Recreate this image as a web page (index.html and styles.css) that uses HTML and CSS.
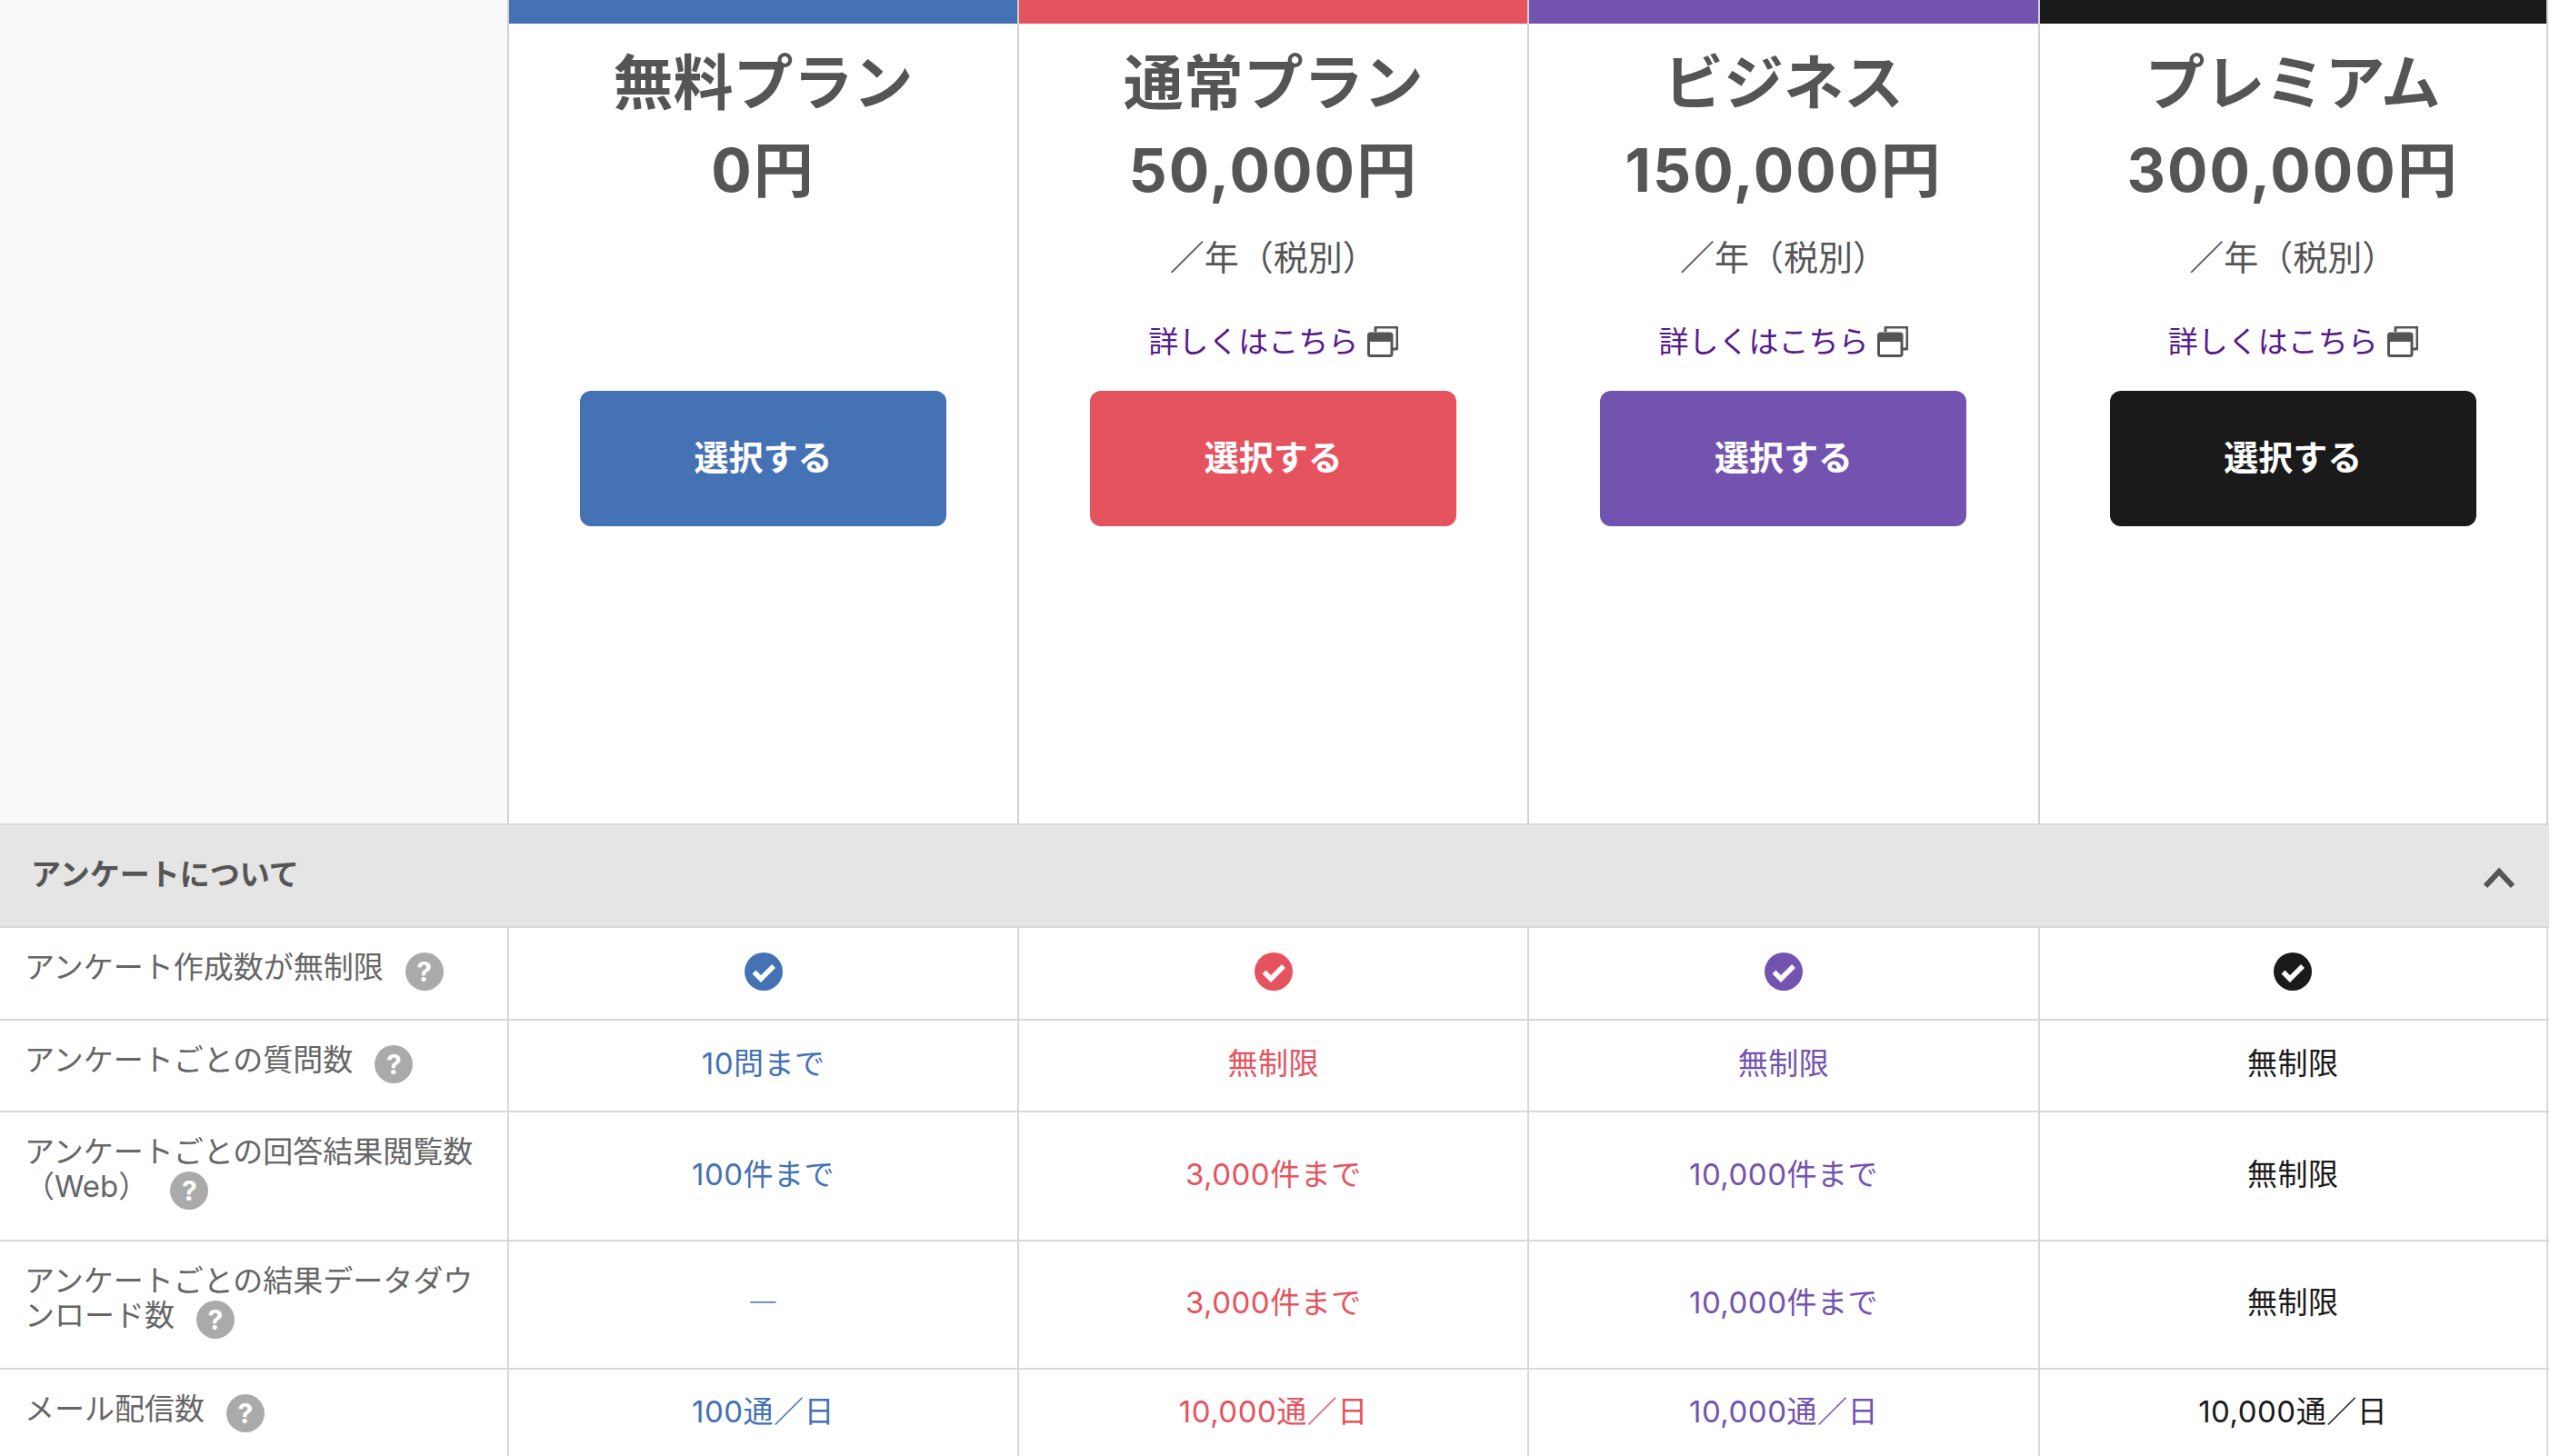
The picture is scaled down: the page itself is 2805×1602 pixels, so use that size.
FILE: index.html
```html
<!DOCTYPE html>
<html lang="ja">
<head>
<meta charset="utf-8">
<title>プラン比較</title>
<link rel="stylesheet" href="styles.css">
</head>
<body>
<svg class="defs" aria-hidden="true">
  <symbol id="check" viewBox="0 0 42 42"><circle cx="21" cy="21" r="21" fill="currentColor"/><path d="M10.500 21.500l7.500 7.500 14-14" fill="none" stroke="#fff" stroke-width="5.500"/></symbol>
  <symbol id="win" viewBox="0 0 34 34"><path d="M9 6V2a1 1 0 0 1 1-1h22a1 1 0 0 1 1 1v22a1 1 0 0 1-1 1h-4" fill="none" stroke="#555" stroke-width="3"/><rect x="1.500" y="8" width="25.500" height="24.500" rx="2" fill="#fff" stroke="#555" stroke-width="3"/><rect x="1.500" y="8" width="25.500" height="9" fill="#555"/></symbol>
</svg>
<main class="table">
  <div class="head">
    <div class="corner"></div>
    <section class="plan blue">
      <div class="bar"></div>
      <div class="info">
        <h2 class="title">無料プラン</h2>
        <p class="price">0円</p>
      </div>
      <a class="btn">選択する</a>
    </section>
    <section class="plan red">
      <div class="bar"></div>
      <div class="info">
        <h2 class="title">通常プラン</h2>
        <p class="price">50,000円</p>
        <p class="tax">／年（税別）</p>
        <a class="more">詳しくはこちら<svg class="win"><use href="#win"/></svg></a>
      </div>
      <a class="btn">選択する</a>
    </section>
    <section class="plan purple">
      <div class="bar"></div>
      <div class="info">
        <h2 class="title">ビジネス</h2>
        <p class="price">150,000円</p>
        <p class="tax">／年（税別）</p>
        <a class="more">詳しくはこちら<svg class="win"><use href="#win"/></svg></a>
      </div>
      <a class="btn">選択する</a>
    </section>
    <section class="plan black">
      <div class="bar"></div>
      <div class="info">
        <h2 class="title">プレミアム</h2>
        <p class="price">300,000円</p>
        <p class="tax">／年（税別）</p>
        <a class="more">詳しくはこちら<svg class="win"><use href="#win"/></svg></a>
      </div>
      <a class="btn">選択する</a>
    </section>
  </div>
  <div class="group">
    <span class="group-title">アンケートについて</span>
    <svg class="chev" viewBox="0 0 36 24"><path d="M3 21L18 5l15 16" fill="none" stroke="#555" stroke-width="6"/></svg>
  </div>
  <div class="row short">
    <div class="label">アンケート作成数が無制限<i class="q">?</i></div>
    <div class="cell blue"><svg class="check"><use href="#check"/></svg></div>
    <div class="cell red"><svg class="check"><use href="#check"/></svg></div>
    <div class="cell purple"><svg class="check"><use href="#check"/></svg></div>
    <div class="cell black"><svg class="check"><use href="#check"/></svg></div>
  </div>
  <div class="row short">
    <div class="label">アンケートごとの質問数<i class="q">?</i></div>
    <div class="cell blue">10問まで</div>
    <div class="cell red">無制限</div>
    <div class="cell purple">無制限</div>
    <div class="cell black">無制限</div>
  </div>
  <div class="row tall">
    <div class="label">アンケートごとの回答結果閲覧数（Web）<i class="q">?</i></div>
    <div class="cell blue">100件まで</div>
    <div class="cell red">3,000件まで</div>
    <div class="cell purple">10,000件まで</div>
    <div class="cell black">無制限</div>
  </div>
  <div class="row tall">
    <div class="label">アンケートごとの結果データダウンロード数<i class="q">?</i></div>
    <div class="cell blue dash">―</div>
    <div class="cell red">3,000件まで</div>
    <div class="cell purple">10,000件まで</div>
    <div class="cell black">無制限</div>
  </div>
  <div class="row short">
    <div class="label">メール配信数<i class="q">?</i></div>
    <div class="cell blue">100通／日</div>
    <div class="cell red">10,000通／日</div>
    <div class="cell purple">10,000通／日</div>
    <div class="cell black">10,000通／日</div>
  </div>
</main>
</body>
</html>
```
FILE: styles.css
```css
* { box-sizing: border-box; }
html, body { margin: 0; padding: 0; background: #fff; }
body {
  width: 2805px;
  height: 1602px;
  overflow: hidden;
  font-family: Inter, "Noto Sans CJK JP", "Noto Sans", sans-serif;
  color: #555;
}
.defs { display: none; }
.blue { --c: #4472b4; }
.red { --c: #e5535f; }
.purple { --c: #7353b0; }
.black { --c: #1a1a1a; }

.table { width: 2804px; }
.head, .row {
  display: grid;
  grid-template-columns: 558px repeat(4, 561.200px);
}
.head { height: 906px; }
.corner { background: #f9f9f9; }
.plan {
  display: flex;
  flex-direction: column;
  align-items: center;
  border-left: 2px solid #d2d2d2;
}
.plan:last-child { border-right: 2px solid #d2d2d2; }
.bar { width: 100%; height: 26px; flex: none; background: var(--c); }
.info { height: 404px; flex: none; width: 100%; padding-top: 16px; text-align: center; }
.title, .price, .tax { margin: 0; }
.title { font-size: 66px; font-weight: 700; line-height: 98px; }
.price { font-size: 66px; font-weight: 700; line-height: 98px; margin-top: -2px; letter-spacing: 2px; }
.tax { margin-top: 22px; font-size: 38px; line-height: 50px; }
.more {
  display: flex;
  justify-content: center;
  align-items: center;
  gap: 10px;
  margin-top: 43px;
  font-size: 33px;
  line-height: 50px;
  color: #551a8b;
}
.win { width: 34px; height: 34px; }
.btn {
  display: flex;
  align-items: center;
  justify-content: center;
  width: 403px;
  height: 149px;
  padding-bottom: 9px;
  border-radius: 12px;
  background: var(--c);
  color: #fff;
  font-size: 38px;
  font-weight: 700;
}
.group {
  display: flex;
  align-items: center;
  justify-content: space-between;
  height: 115px;
  padding: 0 37px 0 34px;
  background: #e5e5e5;
  border-top: 2px solid #d8d8d8;
  border-bottom: 2px solid #d8d8d8;
  font-size: 33px;
  font-weight: 700;
}
.group-title { padding-bottom: 8px; }
.chev { width: 36px; height: 24px; margin-top: 4px; }
.row { border-bottom: 2px solid #d8d8d8; }
.short { height: 101.500px; }
.tall { height: 141.500px; }
.row:last-child { border-bottom: 0; }
.label {
  padding: 24px 10px 0 27px;
  font-size: 33px;
  line-height: 38px;
  color: #666;
}
.q {
  display: inline-block;
  width: 42px;
  height: 42px;
  margin-left: 24px;
  border-radius: 50%;
  background: #aaa;
  color: #fff;
  font-style: normal;
  font-weight: 700;
  font-size: 30px;
  line-height: 42px;
  text-align: center;
  vertical-align: -4px;
}
.cell {
  display: flex;
  align-items: center;
  justify-content: center;
  padding-bottom: 8px;
  border-left: 2px solid #d8d8d8;
  font-size: 33px;
  letter-spacing: 0.500px;
  color: var(--c);
}
.cell:last-child { border-right: 2px solid #d8d8d8; }
.row:last-child .cell { padding-bottom: 13px; }
.dash { font-family: "Noto Sans CJK JP", sans-serif; }
.check { width: 42px; height: 42px; margin-top: 5px; }
```
